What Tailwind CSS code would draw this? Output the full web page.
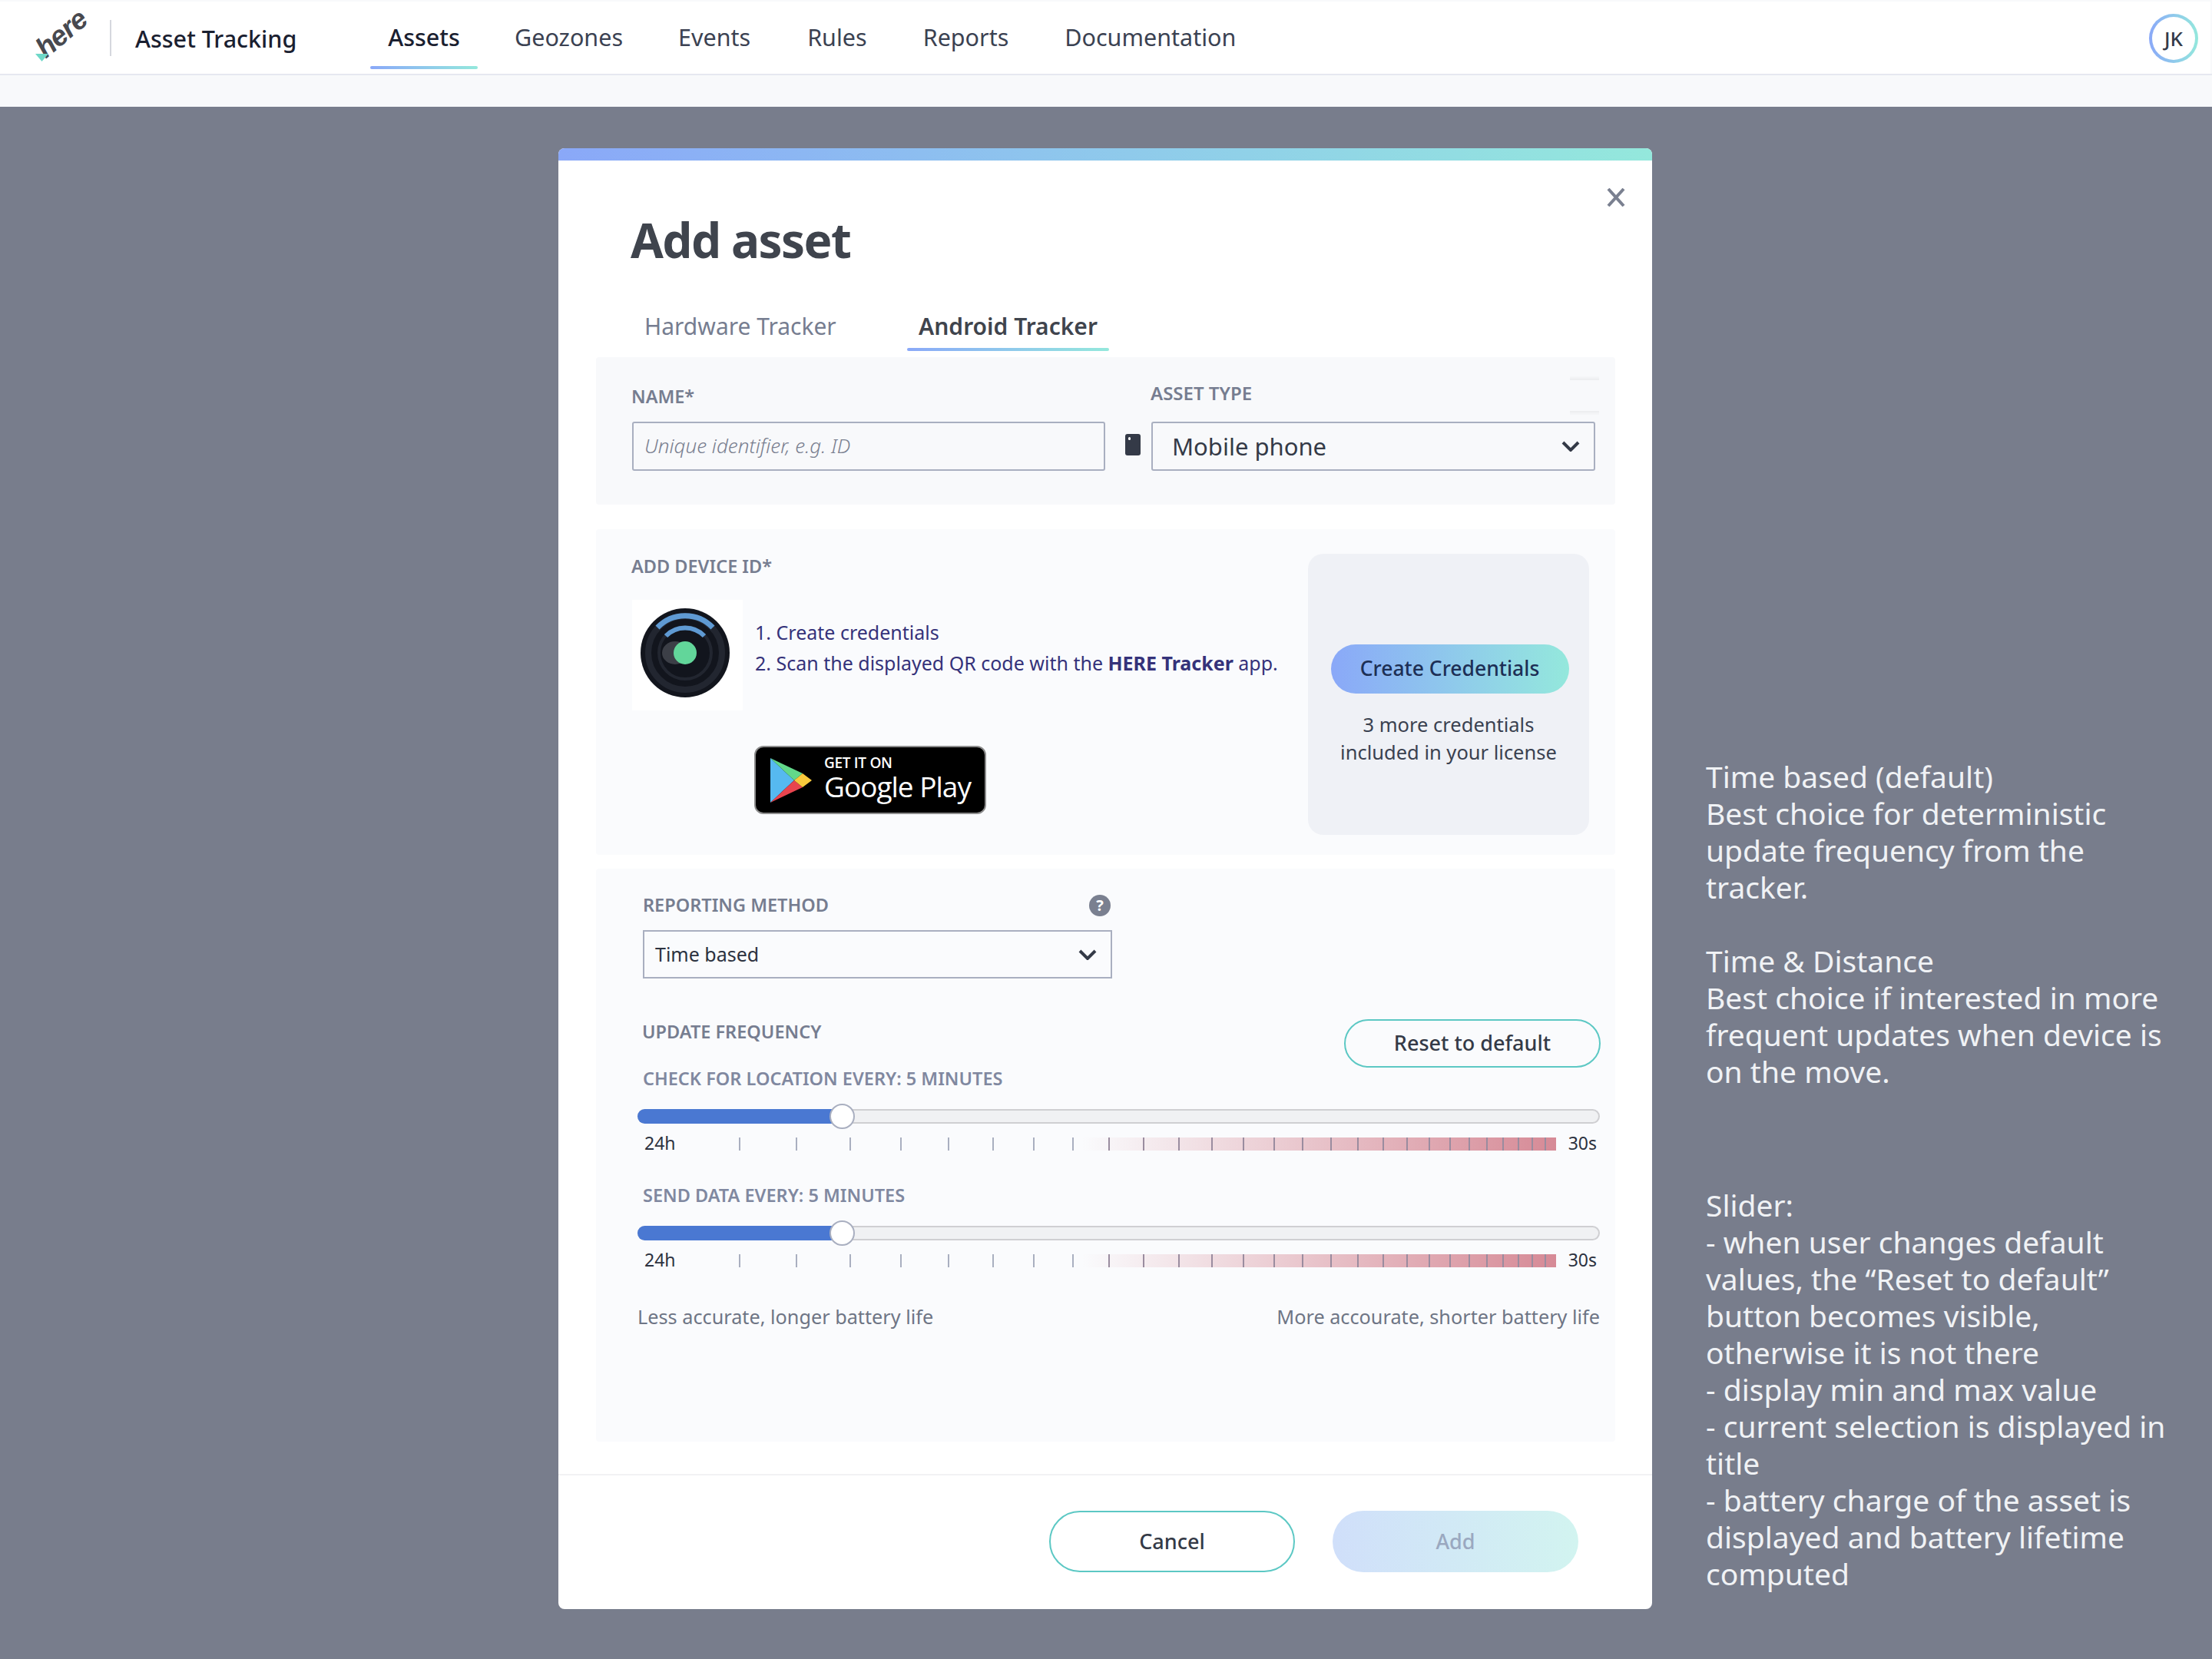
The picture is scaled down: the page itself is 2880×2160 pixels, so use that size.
<!DOCTYPE html>
<html lang="en">
  <head>
    <meta charset="UTF-8" />
    <meta name="viewport" content="width=device-width, initial-scale=1.0" />
    <title>Asset Tracking</title>
    <script src="https://cdn.jsdelivr.net/npm/@tailwindcss/browser@4"></script>
  </head>
  <body class="font-['Noto_Sans',sans-serif] text-[#343a47]">
    <div class="flex flex-col h-[2160px] w-[2880px] overflow-hidden bg-[#f8f9fb]">
      <!-- top nav -->
      <header class="flex items-center h-[94px] mt-[2px] mr-[2px] bg-white shrink-0 relative">
        <div class="relative w-[143px] h-full shrink-0">
          <span class="absolute left-[43px] top-[22px] font-['Liberation_Sans',sans-serif] font-bold italic text-[37px] leading-[40px] tracking-[-1px] text-[#48494f] -rotate-[40deg]">here</span>
          <svg class="absolute left-[46px] top-[68px]" width="17" height="10" viewBox="0 0 17 10"><path d="M0 0h17l-8.500 10z" fill="#6fd8c8" /></svg>
        </div>
        <div class="w-[2px] h-[47px] bg-[#d5d7de]"></div>
        <div class="ml-[31px] mt-[3px] w-[306px] text-[30.500px] font-medium text-[#1a2030]">Asset Tracking</div>
        <nav class="flex items-center text-[30.500px] h-full text-[#3b4252]">
          <div class="relative flex items-center h-full w-[140px] justify-center mr-[48px] font-medium text-[#1a2030]">
            Assets
            <div class="absolute left-0 right-0 bottom-[6px] h-[4px] rounded-full bg-gradient-to-r from-[#8aa8f8] to-[#94e8dc]"></div>
          </div>
          <span class="mr-[72px]">Geozones</span>
          <span class="mr-[74px]">Events</span>
          <span class="mr-[73px]">Rules</span>
          <span class="mr-[73px]">Reports</span>
          <span>Documentation</span>
        </nav>
        <div class="ml-auto mr-[16px] mt-[2px] w-[64px] h-[64px] rounded-full bg-gradient-to-r from-[#8aa8f8] to-[#94e8dc] p-[4px]">
          <div class="w-full h-full rounded-full bg-white flex items-center justify-center text-[26px] font-medium">JK</div>
        </div>
      </header>
      <div class="h-[2px] bg-[#e6e8f0] shrink-0"></div>
      <div class="h-[41px] shrink-0"></div>

      <!-- overlay -->
      <main class="flex-1 flex items-start bg-[#787d8c] pl-[727px] pt-[54px]">
        <section class="relative flex flex-col w-[1424px] h-[1902px] shrink-0 rounded-lg overflow-hidden bg-white">
          <div class="h-[16px] shrink-0 bg-gradient-to-r from-[#8aa8f8] to-[#94e8dc]"></div>
          <svg class="absolute left-[1365px] top-[52px]" width="24" height="24" viewBox="0 0 24 24" fill="none" stroke="#7a8090" stroke-width="4"><path d="M2 1l20 22M22 1L2 23" /></svg>

          <h1 class="mt-[65px] ml-[94px] text-[62px] leading-[76px] tracking-[-1.6px] font-bold text-[#3f444d]">Add asset</h1>

          <!-- tabs -->
          <div class="flex items-start ml-[49px] mt-[53px] h-[62px] text-[30px] leading-[44px]">
            <div class="w-[405px] pl-[63px] text-[#767d90]">Hardware Tracker</div>
            <div class="w-[263px] h-[44px] text-center font-semibold text-[#3f444d]">
              Android Tracker
              <div class="mt-[6px] h-[4px] rounded-full bg-gradient-to-r from-[#8aa8f8] to-[#94e8dc]"></div>
            </div>
          </div>

          <!-- name + type -->
          <div class="relative flex items-end ml-[49px] mr-[48px] h-[192px] pb-[44px] pl-[47px] rounded bg-[#f8f9fb] shrink-0">
            <div class="absolute left-[1268px] top-[24px] w-[38px] h-[6px] bg-gradient-to-t from-black/5 to-transparent"></div>
            <div class="absolute left-[1268px] top-[70px] w-[38px] h-[6px] bg-gradient-to-b from-black/5 to-transparent"></div>
            <div class="w-[616px] shrink-0">
              <label class="block ml-[-1px] text-[23.500px] leading-[32px] font-semibold text-[#767d90] mb-[17px]">NAME*</label>
              <div class="flex items-center h-[64px] pl-[14px] pb-[2px] rounded-[3px] border-2 border-[#a9afc0] text-[26px] italic font-light text-[#7a8090]">Unique identifier, e.g. ID</div>
            </div>
            <div class="relative ml-[26px] mb-[20px] w-[20px] h-[28px] shrink-0 rounded-[3px] bg-[#343a47]">
              <div class="absolute left-[4px] top-[4px] w-[3px] h-[4px] rounded-full bg-white"></div>
            </div>
            <div class="relative z-10 ml-[14px] w-[578px] shrink-0">
              <label class="block ml-[-1px] text-[24px] leading-[32px] font-semibold text-[#767d90] mb-[21px]">ASSET TYPE</label>
              <div class="flex items-center justify-between h-[64px] pl-[25px] pr-[18px] rounded-[3px] border-2 border-[#a9afc0] text-[31px]">
                Mobile phone
                <svg width="24" height="14" viewBox="0 0 24 14" fill="none" stroke="#343a47" stroke-width="4"><path d="M2 2l10 10L22 2" /></svg>
              </div>
            </div>
          </div>

          <!-- device id -->
          <div class="flex justify-between ml-[49px] mr-[48px] mt-[32px] h-[424px] rounded bg-[#fafbfd] shrink-0">
            <div class="pl-[47px] pt-[32px]">
              <label class="block ml-[-1px] text-[23.500px] leading-[32px] font-semibold text-[#767d90]">ADD DEVICE ID*</label>
              <div class="flex items-start mt-[28px]">
                <svg class="shrink-0 bg-white" width="144" height="144" viewBox="0 0 144 144" fill="none">
                  <circle cx="69" cy="69" r="58" fill="#12151d" />
                  <circle cx="69" cy="69" r="48" stroke="#222630" stroke-width="8" />
                  <circle cx="69" cy="69" r="34" stroke="#222630" stroke-width="4" />
                  <ellipse cx="56" cy="69" rx="17" ry="15" fill="#3c3f47" />
                  <circle cx="69" cy="69" r="15" fill="#62d69a" />
                  <path d="M33 36A50 50 0 0 1 105 36" stroke="#5f9ad3" stroke-width="7" />
                  <path d="M44 47A35 35 0 0 1 94 47" stroke="#5f9ad3" stroke-width="6" />
                </svg>
                <div class="ml-[16px] mt-[22px] text-[25px] leading-[40px] text-[#35327a]">
                  <p>1. Create credentials</p>
                  <p>2. Scan the displayed QR code with the <b class="font-bold">HERE Tracker</b> app.</p>
                </div>
              </div>
              <!-- store badge -->
              <div class="flex items-center ml-[159px] mt-[46px] w-[302px] h-[89px] rounded-xl border-2 border-[#8c8c8c] bg-black text-white font-['Open_Sans',sans-serif]">
                <svg class="ml-[19px] shrink-0" width="54" height="58" viewBox="0 0 54 58">
                  <path d="M0 0L31 29L0 58z" fill="#56b9f0" />
                  <path d="M0 0L42 20L31 29z" fill="#62d88a" />
                  <path d="M0 58L42 38L31 29z" fill="#e8444e" />
                  <path d="M42 20L54 29L42 38L31 29z" fill="#f8c93c" />
                </svg>
                <div class="ml-[16px] mt-[-3px] flex flex-col">
                  <span class="text-[19px] leading-[20px] font-semibold tracking-[-0.3px]">GET IT ON</span>
                  <span class="text-[37px] leading-[42px] tracking-[-1px]">Google Play</span>
                </div>
              </div>
            </div>
            <div class="flex flex-col items-center w-[366px] h-[366px] mt-[32px] mr-[34px] pt-[118px] rounded-[20px] bg-[#eff1f6]">
              <div class="flex items-center justify-center w-[310px] h-[64px] ml-[3px] rounded-full bg-gradient-to-r from-[#8aa8f8] to-[#94e8dc] text-[26.500px] font-medium text-[#1d2f55]">Create Credentials</div>
              <p class="mt-[22px] text-center text-[25.500px] leading-[36px] text-[#3a4150]">3 more credentials<br />included in your license</p>
            </div>
          </div>

          <!-- reporting -->
          <div class="ml-[49px] mr-[48px] mt-[18px] h-[746px] pl-[54px] pr-[20px] pt-[30px] rounded bg-[#fafbfd] shrink-0">
            <div class="flex items-center justify-between w-[611px] ml-[7px] h-[36px] pr-[2px]">
              <label class="text-[23.500px] font-semibold text-[#767d90]">REPORTING METHOD</label>
              <div class="flex items-center justify-center w-[28px] h-[28px] rounded-full bg-[#7a8090] text-[20px] leading-none font-bold text-white">?</div>
            </div>
            <div class="flex items-center justify-between w-[611px] h-[63px] ml-[7px] mt-[14px] pl-[14px] pr-[18px] border-2 border-[#a9afc0] text-[25px] text-[#2c3240]">
              Time based
              <svg width="24" height="14" viewBox="0 0 24 14" fill="none" stroke="#343a47" stroke-width="4"><path d="M2 2l10 10L22 2" /></svg>
            </div>

            <div class="flex items-start justify-between mt-[53px] h-[63px]">
              <label class="ml-[6px] mt-[-2px] text-[23.500px] leading-[36px] font-semibold text-[#767d90]">UPDATE FREQUENCY</label>
              <div class="flex items-center justify-center w-[334px] h-[63px] mr-[-1px] rounded-full border-2 border-[#5cc8c4] text-[27px] font-medium">Reset to default</div>
            </div>

            <label class="block ml-[7px] mt-[-4px] text-[23.500px] leading-[36px] font-semibold text-[#8088a0]">CHECK FOR LOCATION EVERY: 5 MINUTES</label>
            <div class="mt-[22px]">
              <div class="relative h-[19px] rounded-full border-2 border-[#cfcfd2] bg-[#f0f1f3]">
                <div class="absolute left-[-2px] top-[-2px] w-[258px] h-[19px] rounded-l-full bg-[#4a78d2]"></div>
                <div class="absolute left-[248px] top-[-9px] w-[33px] h-[33px] rounded-full border-2 border-[#a9afc0] bg-white"></div>
              </div>
              <div class="relative flex items-center justify-between h-[17px] mt-[18px] pl-[9px] pr-[4px] pb-[2px] text-[23px] text-[#2c3240]">
                <div class="absolute left-[579px] top-0 w-[617px] h-full bg-gradient-to-r from-[#d68a96]/0 to-[#d68a96]"></div>
                <div class="ticks absolute inset-0"></div>
                <span class="relative">24h</span>
                <span class="relative">30s</span>
              </div>
            </div>

            <label class="block ml-[7px] mt-[40px] text-[23.500px] leading-[36px] font-semibold text-[#8088a0]">SEND DATA EVERY: 5 MINUTES</label>
            <div class="mt-[22px]">
              <div class="relative h-[19px] rounded-full border-2 border-[#cfcfd2] bg-[#f0f1f3]">
                <div class="absolute left-[-2px] top-[-2px] w-[258px] h-[19px] rounded-l-full bg-[#4a78d2]"></div>
                <div class="absolute left-[248px] top-[-9px] w-[33px] h-[33px] rounded-full border-2 border-[#a9afc0] bg-white"></div>
              </div>
              <div class="relative flex items-center justify-between h-[17px] mt-[18px] pl-[9px] pr-[4px] pb-[2px] text-[23px] text-[#2c3240]">
                <div class="absolute left-[579px] top-0 w-[617px] h-full bg-gradient-to-r from-[#d68a96]/0 to-[#d68a96]"></div>
                <div class="ticks absolute inset-0"></div>
                <span class="relative">24h</span>
                <span class="relative">30s</span>
              </div>
            </div>

            <div class="flex justify-between mt-[46px] text-[25.250px] leading-[36px] text-[#6e7585]">
              <span>Less accurate, longer battery life</span>
              <span>More accourate, shorter battery life</span>
            </div>
          </div>

          <!-- footer -->
          <div class="flex items-start justify-end mt-[42px] pt-[46px] pr-[96px] border-t-2 border-[#f2f2f4] gap-[49px] text-[27px] font-medium">
            <div class="flex items-center justify-center w-[320px] h-[80px] rounded-full border-2 border-[#5cc8c4]">Cancel</div>
            <div class="flex items-center justify-center w-[320px] h-[80px] rounded-full bg-gradient-to-r from-[#d0dffa] to-[#d2f4f0] text-[#9aa8c0]">Add</div>
          </div>
        </section>

        <!-- annotation -->
        <aside class="ml-[70px] pt-[794px] text-[39px] leading-[48px] text-[#f0f2f5] whitespace-nowrap">
          <p>Time based (default)<br />Best choice for deterministic<br />update frequency from the<br />tracker.<br /><br />Time &amp; Distance<br />Best choice if interested in more<br />frequent updates when device is<br />on the move.</p>
          <p class="mt-[126px]">Slider:<br />- when user changes default<br />values, the “Reset to default”<br />button becomes visible,<br />otherwise it is not there<br />- display min and max value<br />- current selection is displayed in<br />title<br />- battery charge of the asset is<br />displayed and battery lifetime<br />computed</p>
        </aside>
      </main>
    </div>

    <script>
      // tick marks under the sliders, x measured from the track's left edge
      const tickXs = [132, 206, 276, 342, 404, 462, 515, 566, 613, 658, 704, 747, 788, 828, 865, 902, 937, 970, 1001, 1030, 1057, 1082, 1105, 1126, 1146, 1164, 1181];
      document.querySelectorAll(".ticks").forEach((row) => {
        tickXs.forEach((x) => {
          const tick = document.createElement("div");
          tick.className = x < 600 ? "absolute top-0 h-full w-[2px] bg-[#a9afc0]" : "absolute top-0 h-full w-[2px] bg-[#9a8c9f]";
          tick.style.left = x + "px";
          row.appendChild(tick);
        });
      });
    </script>
  </body>
</html>
